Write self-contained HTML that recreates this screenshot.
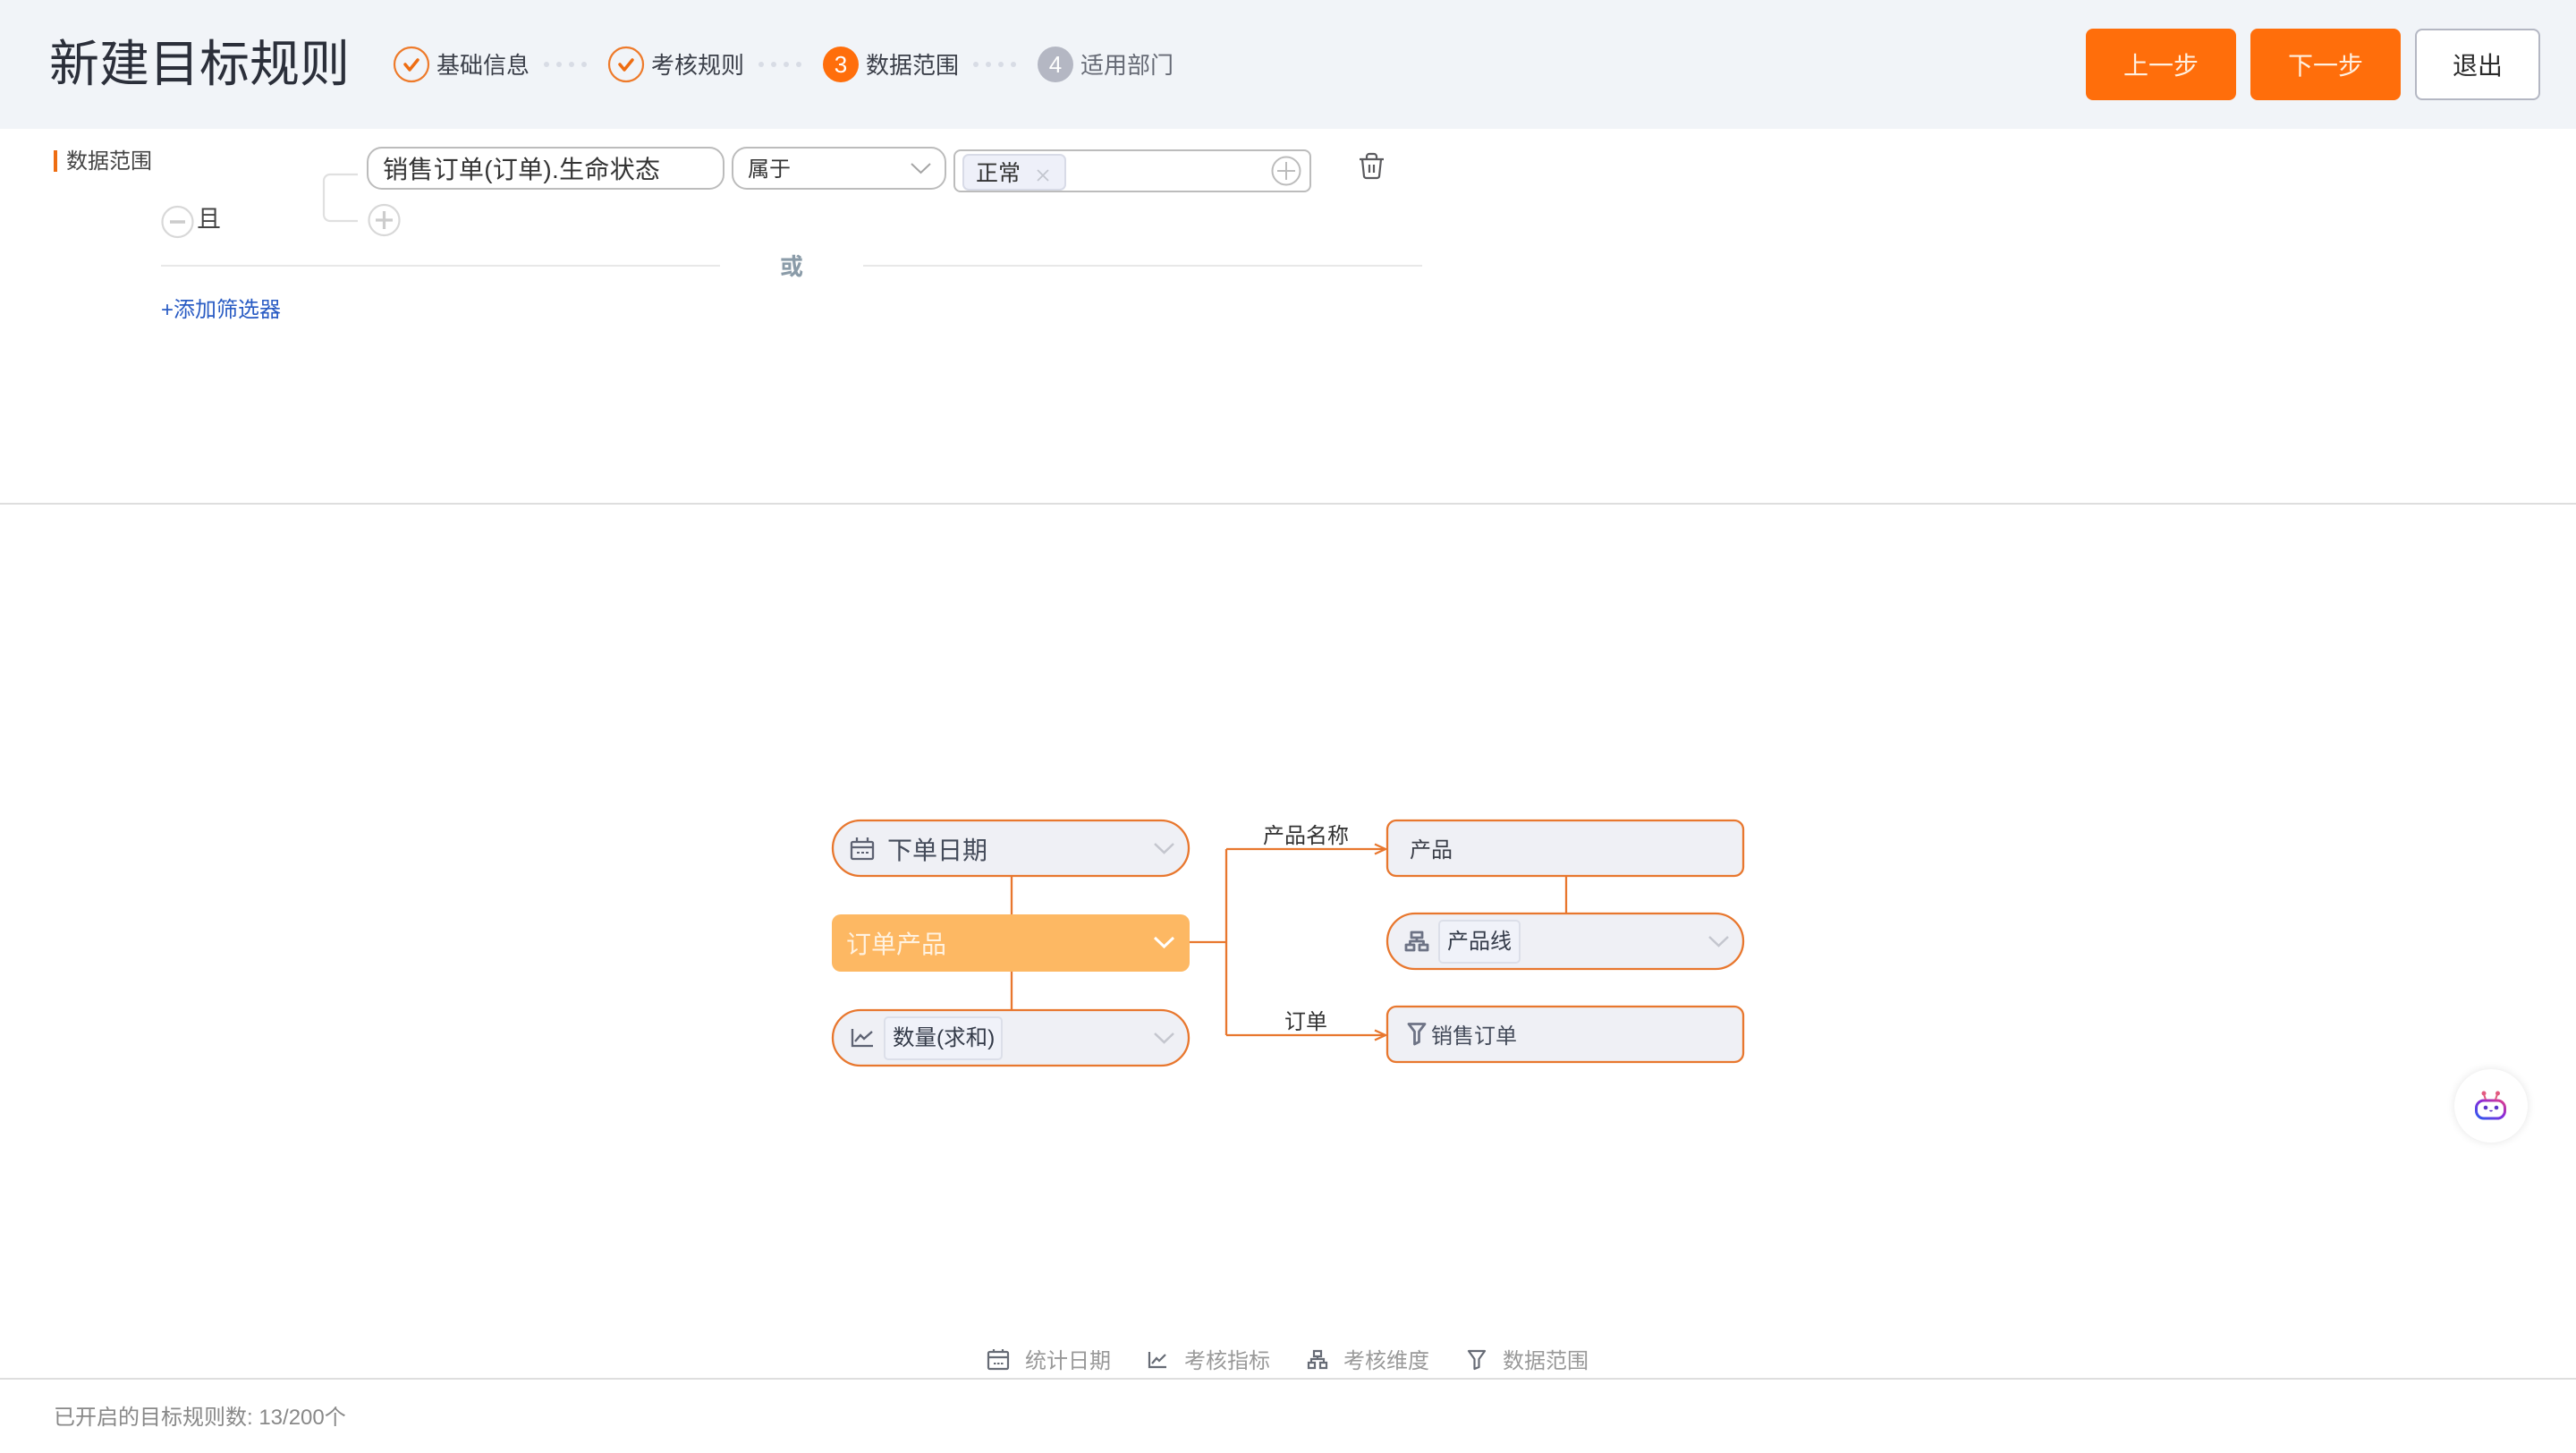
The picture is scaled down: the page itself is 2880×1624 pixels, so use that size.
<!DOCTYPE html>
<html lang="zh"><head><meta charset="utf-8"><title>新建目标规则</title>
<style>
html,body{margin:0;padding:0;background:#fff}
#p{position:relative;width:2880px;height:1624px;overflow:hidden;background:#fff;font-family:"Liberation Sans","Noto Sans CJK SC",sans-serif}
svg{position:absolute;left:0;top:0}
.t{position:absolute;white-space:nowrap;line-height:40px;height:40px;color:#333}
.b{position:absolute;box-sizing:border-box;display:flex;align-items:center;justify-content:center;font-size:28px}
</style></head><body><div id="p">
<svg width="2880" height="1624" viewBox="0 0 2880 1624" fill="none">
<rect width="2880" height="144" fill="#f1f4f8"/>
<!-- steps -->
<g stroke="#ee7a2a" stroke-width="2.2"><circle cx="460" cy="72" r="19"/><circle cx="700" cy="72" r="19"/></g>
<g stroke="#ee6d12" stroke-width="3.5" stroke-linecap="round" stroke-linejoin="round"><path d="M453 72l5 6 9-11"/><path d="M693 72l5 6 9-11"/></g>
<circle cx="940" cy="72" r="20" fill="#ff6e0b"/><circle cx="1180" cy="72" r="20" fill="#b4b7c3"/>
<g fill="#d8dce5"><circle cx="611" cy="72" r="3"/><circle cx="625" cy="72" r="3"/><circle cx="639" cy="72" r="3"/><circle cx="653" cy="72" r="3"/><circle cx="851" cy="72" r="3"/><circle cx="865" cy="72" r="3"/><circle cx="879" cy="72" r="3"/><circle cx="893" cy="72" r="3"/><circle cx="1091" cy="72" r="3"/><circle cx="1105" cy="72" r="3"/><circle cx="1119" cy="72" r="3"/><circle cx="1133" cy="72" r="3"/></g>
<!-- filter area -->
<rect x="60" y="168" width="4" height="24" fill="#ee6d12"/>
<path d="M400 195H369a7 7 0 0 0-7 7v38a7 7 0 0 0 7 7h31" stroke="#e0e0e0" stroke-width="2.2"/>
<circle cx="198.500" cy="248" r="17" stroke="#d8d8d8" stroke-width="2.2"/><path d="M190 248h17" stroke="#cccccc" stroke-width="3.500"/>
<circle cx="429.500" cy="246" r="17" stroke="#d8d8d8" stroke-width="2.2"/><path d="M420 246h19M429.500 236v20" stroke="#cccccc" stroke-width="3.200"/>
<rect x="411" y="165" width="398" height="46" rx="16" fill="#fff" stroke="#bcbcbc" stroke-width="2"/>
<rect x="819" y="165" width="238" height="46" rx="16" fill="#fff" stroke="#bcbcbc" stroke-width="2"/>
<path d="M1019 183l10.500 10 10.500-10" stroke="#a5a5a5" stroke-width="2"/>
<rect x="1067" y="168" width="398" height="46" rx="7" fill="#fff" stroke="#bcbcbc" stroke-width="2"/>
<rect x="1077" y="173" width="114" height="39" rx="6" fill="#eef0f9" stroke="#d8dbe7" stroke-width="2"/>
<path d="M1160 190l12 12M1172 190l-12 12" stroke="#c3c6cf" stroke-width="1.800"/>
<circle cx="1438" cy="191" r="15.500" stroke="#bcbcbc" stroke-width="2"/><path d="M1428 191h20M1438 181v20" stroke="#bcbcbc" stroke-width="2"/>
<g stroke="#5a5a5e" stroke-width="2.200" stroke-linejoin="round"><path d="M1520 178h27M1528 178v-3a3 3 0 0 1 3-3h5a3 3 0 0 1 3 3v3M1523 178l2 19a2.500 2.500 0 0 0 2.500 2h12a2.500 2.500 0 0 0 2.500-2l2-19M1531 184v9M1536 184v9"/></g>
<path d="M180 297H805M965 297H1590" stroke="#e8e8e8" stroke-width="2"/>
<rect x="0" y="562" width="2880" height="2" fill="#dedede"/>
<rect x="0" y="1540" width="2880" height="2" fill="#dedede"/>
<!-- connectors -->
<g stroke="#e8772e" stroke-width="2.300"><path d="M1131 980v42M1131 1086v42M1330 1053h41M1371 949v208M1371 949h178M1371 1157h178M1751 979v42"/>
<path d="M1537 943.500l12 5.500-12 5.500M1537 1151.500l12 5.500-12 5.500"/></g>
<!-- nodes -->
<g stroke="#e8772e" stroke-width="2.300" fill="#eff0f5">
<rect x="931" y="917" width="398" height="62" rx="31"/>
<rect x="931" y="1129" width="398" height="62" rx="31"/>
<rect x="1551" y="917" width="398" height="62" rx="10"/>
<rect x="1551" y="1021" width="398" height="62" rx="31"/>
<rect x="1551" y="1125" width="398" height="62" rx="10"/>
</g>
<rect x="930" y="1022" width="400" height="64" rx="10" fill="#fdb863"/>
<rect x="989" y="1137" width="131" height="47" rx="4" fill="#f0f2f9" stroke="#dcdfe9" stroke-width="2"/>
<rect x="1609" y="1029" width="90" height="47" rx="4" fill="#f0f2f9" stroke="#dcdfe9" stroke-width="2"/>
<g stroke-width="2.500"><path d="M1291 943l10.500 10 10.500-10M1291 1155l10.500 10 10.500-10M1911 1047l10.500 10 10.500-10" stroke="#c4c6ce"/><path d="M1291 1048l10.500 10 10.500-10" stroke="#fff" stroke-width="3"/></g>
<!-- icons in nodes -->
<g stroke="#5d6272" stroke-width="2.300">
<path d="M953.500 941h21a1.500 1.500 0 0 1 1.500 1.500v16a1.500 1.500 0 0 1-1.500 1.500h-21a1.500 1.500 0 0 1-1.500-1.500v-16a1.500 1.500 0 0 1 1.500-1.500zM952 947h24M958 936v5M970 936v5"/>
<path d="M958 953h3M963 953h3M968 953h3" stroke-width="2"/>
<path d="M953 1150v19h23M956 1164l6-7 4 4 9-8"/>
</g>
<g stroke="#6d7385" stroke-width="2.800" stroke-linejoin="round">
<path d="M1578 1042h12v6h-12zM1572 1056h9v6h-9zM1587 1056h9v6h-9zM1584 1048v4M1576.500 1056v-4h15v4"/>
<path d="M1575 1144.500h18l-6.500 8.500v11.500l-5 2.500v-14z"/>
</g>
<!-- legend icons -->
<g stroke="#666b75" stroke-width="2.200">
<path d="M1106.500 1511h19a1.500 1.500 0 0 1 1.500 1.500v16a1.500 1.500 0 0 1-1.500 1.500h-19a1.500 1.500 0 0 1-1.500-1.500v-16a1.500 1.500 0 0 1 1.500-1.500zM1105 1517h22M1111 1508v3M1121 1508v3"/>
<path d="M1111 1524h2.500M1115 1524h2.500M1119 1524h2.500" stroke-width="2"/>
<path d="M1285 1511v17h19M1288 1524l5-6 3 3 7-7"/>
<path d="M1469 1510h8v6h-8zM1463 1523h7v6h-7zM1476 1523h7v6h-7zM1473 1516v3M1466 1523v-4h14v4"/>
<path d="M1642 1510h18l-6.500 9v9l-5 2v-11z" stroke-linejoin="round"/>
</g>
<!-- bot -->
<defs><filter id="s" x="-30%" y="-30%" width="160%" height="160%"><feGaussianBlur stdDeviation="5"/></filter>
<linearGradient id="g" x1="0" y1="1" x2="1" y2="0"><stop offset="0" stop-color="#2a5cf0"/><stop offset=".55" stop-color="#8a2ad8"/><stop offset="1" stop-color="#e0408a"/></linearGradient></defs>
<circle cx="2785" cy="1236" r="41" fill="#000" opacity=".1" filter="url(#s)"/>
<circle cx="2785" cy="1236" r="41" fill="#fff"/>
<rect x="2768.500" y="1230" width="32" height="20" rx="8.500" stroke="url(#g)" stroke-width="3"/>
<path d="M2779 1229l-2-6M2790 1229l2-6" stroke="#e25a80" stroke-width="2"/><circle cx="2777" cy="1222" r="2.500" fill="#e25a80"/><circle cx="2792.500" cy="1222" r="2.500" fill="#e25a80"/>
<circle cx="2779" cy="1238" r="2.300" fill="#5a35c8"/><circle cx="2791" cy="1238" r="2.300" fill="#5a35c8"/><path d="M2783.500 1241q1.500 1.500 3 0" stroke="#5a35c8" stroke-width="1.500"/>
</svg>

<div class="t" style="left:55px;top:42px;height:60px;line-height:60px;font-size:56px;color:#2b2f3a">新建目标规则</div>
<div class="t" style="left:488px;top:53px;font-size:26px;color:#3a3e48">基础信息</div>
<div class="t" style="left:728px;top:53px;font-size:26px;color:#3a3e48">考核规则</div>
<div class="t" style="left:968px;top:53px;font-size:26px;color:#3a3e48">数据范围</div>
<div class="t" style="left:1208px;top:53px;font-size:26px;color:#666a75">适用部门</div>
<div class="t" style="left:920px;width:40px;text-align:center;top:52px;font-size:26px;color:#fff">3</div>
<div class="t" style="left:1160px;width:40px;text-align:center;top:52px;font-size:26px;color:#fff">4</div>

<div class="b" style="left:2332px;top:32px;width:168px;height:80px;background:#ff6e0b;border-radius:8px;color:#fff0e0">上一步</div>
<div class="b" style="left:2516px;top:32px;width:168px;height:80px;background:#ff6e0b;border-radius:8px;color:#fff0e0">下一步</div>
<div class="b" style="left:2700px;top:32px;width:140px;height:80px;background:#fff;border:2px solid #b4b7c3;border-radius:8px;color:#2b2b2b">退出</div>

<div class="t" style="left:74px;top:161px;font-size:24px;color:#444">数据范围</div>
<div class="t" style="left:220px;top:225px;font-size:27px;color:#444">且</div>
<div class="t" style="left:428px;top:170px;font-size:28px;letter-spacing:.3px;color:#333">销售订单(订单).生命状态</div>
<div class="t" style="left:836px;top:170px;font-size:24px;color:#333">属于</div>
<div class="t" style="left:1091px;top:174px;font-size:25px;color:#333">正常</div>
<div class="t" style="left:872px;top:278px;font-size:26px;font-weight:700;color:#8a9ba8">或</div>
<div class="t" style="left:180px;top:327px;font-size:24px;color:#2a5cc4">+添加筛选器</div>

<div class="t" style="left:992px;top:931px;font-size:28px;color:#444b5a">下单日期</div>
<div class="t" style="left:946px;top:1036px;font-size:28px;color:#fff2e0">订单产品</div>
<div class="t" style="left:998px;top:1141px;font-size:24.5px;color:#333a48">数量(求和)</div>
<div class="t" style="left:1412px;top:915px;font-size:24px;color:#333">产品名称</div>
<div class="t" style="left:1436px;top:1123px;font-size:24px;color:#333">订单</div>
<div class="t" style="left:1576px;top:931px;font-size:24px;color:#3a3e48">产品</div>
<div class="t" style="left:1618px;top:1033px;font-size:24px;color:#333a48">产品线</div>
<div class="t" style="left:1600px;top:1139px;font-size:24px;color:#444b5a">销售订单</div>

<div class="t" style="left:1146px;top:1502px;font-size:24px;color:#999">统计日期</div>
<div class="t" style="left:1324px;top:1502px;font-size:24px;color:#999">考核指标</div>
<div class="t" style="left:1502px;top:1502px;font-size:24px;color:#999">考核维度</div>
<div class="t" style="left:1680px;top:1502px;font-size:24px;color:#999">数据范围</div>
<div class="t" style="left:60px;top:1565px;font-size:24px;color:#888">已开启的目标规则数: 13/200个</div>
</div></body></html>
